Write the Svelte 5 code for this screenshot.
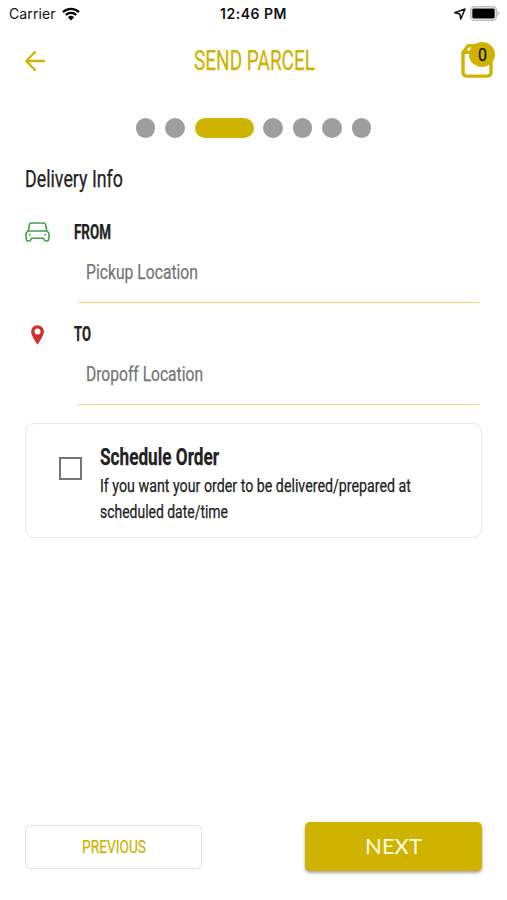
<script lang="ts">
  const steps = 7;
  const current = 2;

  let pickup = $state("");
  let dropoff = $state("");
  let scheduled = $state(false);

  // Narrows a line of text to the given width, like a condensed face.
  function condense(node: HTMLElement, width: number) {
    const natural = node.getBoundingClientRect().width;
    node.style.transform = `scaleX(${width / natural})`;
    node.style.marginRight = `${width - natural}px`;
  }
</script>

<div class="screen">
  <div class="status">
    <div class="status__side">
      <span class="carrier">Carrier</span>
      <svg class="wifi" width="18" height="14" viewBox="0 0 18 14" aria-hidden="true">
        <path d="M1 5.1a11.5 11.5 0 0 1 16 0" />
        <path d="M3.8 8a7.5 7.5 0 0 1 10.4 0" />
        <path class="solid" d="M5.9 10.2a4.5 4.5 0 0 1 6.2 0L9 13.5z" />
      </svg>
    </div>
    <span class="time">12:46 PM</span>
    <div class="status__side status__side--end">
      <svg class="locate" width="12" height="12" viewBox="0 0 12 12" aria-hidden="true">
        <path d="M.8 4.8 11 1 6.8 11 5.8 6z" />
      </svg>
      <svg width="30" height="15" viewBox="0 0 30 15" aria-hidden="true">
        <rect x=".8" y=".8" width="25.6" height="13.4" rx="3.8" fill="#fff" stroke="#bdbdbd" stroke-width="1.6" />
        <rect x="2.3" y="2.5" width="22.4" height="10" rx="1.4" />
        <path d="M27.4 4.8q3.4 2.7 0 5.4z" fill="#bdbdbd" />
      </svg>
    </div>
  </div>

  <header>
    <button class="icon-button" aria-label="Back">
      <svg class="back" width="20" height="20" viewBox="0 0 20 20">
        <path d="M19 10H1.5M10 1 1.3 10 10 19" />
      </svg>
    </button>
    <h1><span class="condensed" use:condense={121}>SEND PARCEL</span></h1>
    <button class="icon-button cart" aria-label="Cart">
      <svg class="bag" width="32" height="36" viewBox="0 0 32 36">
        <path d="M2 9.5 7 2.8h17L30 9.5V29.5a3.6 3.6 0 0 1-3.6 3.6H5.6A3.6 3.6 0 0 1 2 29.5zM2 9.2h9" />
        <path d="M10.5 14.5a5.5 5.5 0 0 0 7 5" />
      </svg>
      <span class="badge"><span class="condensed" use:condense={9}>0</span></span>
    </button>
  </header>

  <div class="pagination">
    {#each Array(steps) as _, i}
      <span class="dot" class:active={i === current}></span>
    {/each}
  </div>

  <main>
    <h2><span class="condensed" use:condense={98}>Delivery Info</span></h2>

    <div class="stop">
      <svg class="car" width="26" height="20" viewBox="0 0 26 20" aria-hidden="true">
        <path
          d="M3.2 9 4.4 2.6Q4.7 1 6.3 1h12.4q1.6 0 1.9 1.6L21.8 9q2.6 1.6 2.4 4l-.5 4.2q-.2 1.8-1.6 1.8h-1.2q-1.2 0-1.7-1l-.9-1.8H6.7L5.8 18q-.5 1-1.7 1H2.9q-1.4 0-1.6-1.8L.8 13Q.6 10.6 3.2 9zh18.6"
        />
        <path d="M4.6 12.8h.6M19.8 12.8h.6" />
      </svg>
      <label for="pickup"><span class="condensed" use:condense={37}>FROM</span></label>
    </div>
    <div class="field">
      {#if !pickup}<span class="placeholder"><span class="condensed" use:condense={112}>Pickup Location</span></span>{/if}
      <input id="pickup" bind:value={pickup} />
    </div>

    <div class="stop stop--to">
      <svg class="pin" width="26" height="20" viewBox="0 0 26 20" aria-hidden="true">
        <path
          fill-rule="evenodd"
          d="M12.5 .2a6.3 6.3 0 0 0-6.4 6.4C6.1 11.2 12.5 19.8 12.5 19.8s6.4-8.6 6.4-13.2A6.3 6.3 0 0 0 12.5 .2m0 3.4a3 3 0 1 1 0 6 3 3 0 0 1 0-6"
        />
      </svg>
      <label for="dropoff"><span class="condensed" use:condense={17}>TO</span></label>
    </div>
    <div class="field">
      {#if !dropoff}<span class="placeholder"><span class="condensed" use:condense={117}>Dropoff Location</span></span>{/if}
      <input id="dropoff" bind:value={dropoff} />
    </div>

    <label class="schedule">
      <input type="checkbox" bind:checked={scheduled} />
      <span class="schedule__copy">
        <strong><span class="condensed" use:condense={119}>Schedule Order</span></strong>
        <span class="line"><span class="condensed" use:condense={311}>If you want your order to be delivered/prepared at</span></span>
        <span class="line"><span class="condensed" use:condense={128}>scheduled date/time</span></span>
      </span>
    </label>
  </main>

  <footer>
    <button class="previous"><span class="condensed" use:condense={64}>PREVIOUS</span></button>
    <button class="next">NEXT</button>
  </footer>
</div>

<style>
  :global(body) {
    margin: 0;
    background: #fff;
  }

  .screen {
    --gold: #cfb300;
    display: flex;
    flex-direction: column;
    box-sizing: border-box;
    width: 507px;
    height: 900px;
    overflow: hidden;
    color: #222;
    background: #fff;
    font-family: Roboto, "Liberation Sans", sans-serif;
  }

  .condensed {
    display: inline-block;
    transform-origin: left center;
    white-space: nowrap;
    -webkit-text-stroke: 0.25px currentColor;
  }

  button {
    padding: 0;
    border: 0;
    background: none;
    font: inherit;
  }

  .status {
    display: grid;
    grid-template-columns: 1fr auto 1fr;
    align-items: center;
    height: 27px;
    padding: 0 7px 0 9px;
    color: #111;
    font-family: Inter, sans-serif;
    font-size: 14px;
  }

  .status__side {
    display: flex;
    align-items: center;
    gap: 6px;
  }

  .status__side--end {
    justify-content: flex-end;
    gap: 4px;
  }

  .carrier { letter-spacing: 0.1px; }

  .time {
    margin-right: 2px;
    font-weight: 600;
    letter-spacing: 0.5px;
  }

  .wifi path {
    fill: none;
    stroke: #000;
    stroke-width: 2.3;
  }

  .wifi .solid {
    fill: #000;
    stroke: none;
  }

  .locate path {
    fill: none;
    stroke: #111;
    stroke-width: 1.5;
    stroke-linejoin: round;
  }

  header {
    display: flex;
    align-items: center;
    justify-content: space-between;
    height: 68px;
    padding: 0 14px 0 25px;
  }

  .icon-button { display: flex; }

  .back path {
    fill: none;
    stroke: var(--gold);
    stroke-width: 2.3;
    stroke-linecap: round;
    stroke-linejoin: round;
  }

  h1 {
    margin: 0 0 0 2px;
    color: var(--gold);
    font-size: 27px;
    font-weight: 400;
    line-height: 36px;
  }

  .cart {
    position: relative;
    margin-top: -1px;
  }

  .bag path {
    fill: none;
    stroke: var(--gold);
    stroke-width: 3.4;
    stroke-linejoin: round;
  }

  .badge {
    position: absolute;
    top: -1px;
    right: -2px;
    display: flex;
    align-items: center;
    justify-content: center;
    width: 26px;
    height: 25px;
    border-radius: 50%;
    color: #111;
    background: var(--gold);
    font-size: 18px;
  }

  .pagination {
    display: flex;
    justify-content: center;
    gap: 9.8px;
    margin: 23px 0 0;
  }

  .dot {
    width: 19.6px;
    height: 19.6px;
    border-radius: 10px;
    background: #9e9e9e;
  }

  .dot.active {
    width: 59px;
    background: var(--gold);
  }

  main { padding: 25.4px 25px 0; }

  h2 {
    margin: 0;
    font-size: 23.5px;
    font-weight: 400;
    line-height: 33px;
  }

  .stop {
    display: flex;
    align-items: center;
    gap: 23px;
    height: 24px;
    margin-top: 25px;
    font-size: 19.5px;
    font-weight: 700;
  }

  .car { margin-top: -2px; }

  .stop--to { margin-top: 20px; }

  .car path {
    fill: none;
    stroke: #43a047;
    stroke-width: 1.6;
    stroke-linejoin: round;
    stroke-linecap: round;
  }

  .pin path { fill: #d32f2f; }

  .field {
    position: relative;
    height: 57px;
    margin: 0 3px 0 53px;
    border-bottom: 1px solid #e6d87d;
  }

  .field input {
    box-sizing: border-box;
    width: 100%;
    height: 56px;
    padding: 0 9px;
    border: 0;
    outline: 0;
    background: none;
    font: inherit;
    font-size: 21px;
  }

  .placeholder {
    position: absolute;
    top: 11px;
    left: 8px;
    color: #757575;
    font-size: 21px;
    line-height: 32px;
    pointer-events: none;
  }

  .schedule {
    display: flex;
    box-sizing: border-box;
    height: 115px;
    margin-top: 18px;
    padding-left: 33px;
    border: 1.5px solid #e8e8e8;
    border-radius: 9px;
  }

  .schedule input {
    flex: none;
    box-sizing: border-box;
    width: 23px;
    height: 23px;
    margin: 33px 18px 0 0;
    appearance: none;
    border: 2.2px solid #757575;
  }

  .schedule input:checked { background: var(--gold); }

  .schedule__copy { padding-top: 17px; }

  .schedule strong {
    display: block;
    font-size: 24px;
    line-height: 32px;
  }

  .line {
    display: block;
    font-size: 18px;
    line-height: 26px;
  }

  footer {
    display: flex;
    align-items: center;
    justify-content: space-between;
    margin: auto 25px 29px;
  }

  .previous {
    box-sizing: border-box;
    width: 177px;
    height: 44px;
    border: 1px solid #e2e2e2;
    border-radius: 5px;
    color: var(--gold);
    font-size: 19px;
  }

  .next {
    width: 177px;
    height: 49px;
    padding-bottom: 3px;
    border-radius: 5px;
    color: #fffbe6;
    background: var(--gold);
    box-shadow: 0 2px 3px rgba(0, 0, 0, 0.35);
    font-family: Lato, sans-serif;
    font-size: 22px;
  }
</style>
